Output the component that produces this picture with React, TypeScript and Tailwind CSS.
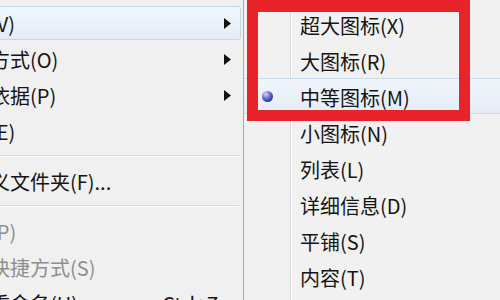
import React from 'react';

type LeftItem =
  | { sep: true }
  | {
      sep?: false;
      label: string;
      arrow?: boolean;
      hover?: boolean;
      disabled?: boolean;
      shortcut?: string;
    };

const LEFT_ITEMS: LeftItem[] = [
  { label: '查看(V)', arrow: true, hover: true },
  { label: '排序方式(O)', arrow: true },
  { label: '分组依据(P)', arrow: true },
  { label: '刷新(E)' },
  { sep: true },
  { label: '自定义文件夹(F)...' },
  { sep: true },
  { label: '粘贴(P)', disabled: true },
  { label: '粘贴快捷方式(S)', disabled: true },
  { label: '撤消重命名(U)', shortcut: 'Ctrl+Z' },
];

const VIEW_ITEMS = [
  '超大图标(X)',
  '大图标(R)',
  '中等图标(M)',
  '小图标(N)',
  '列表(L)',
  '详细信息(D)',
  '平铺(S)',
  '内容(T)',
];

const SELECTED = '中等图标(M)';

function Arrow() {
  return (
    <svg width="7" height="11" viewBox="0 0 7 11" className="mr-[9px] shrink-0">
      <polygon points="0,0 7,5.5 0,11" fill="#111" />
    </svg>
  );
}

function LeftMenu() {
  return (
    <div className="w-[244px] shrink-0 overflow-hidden border-r border-[#ababab] bg-[#f0f0f0]">
      <div className="-ml-[51px] w-[294px] pt-[5px] flex flex-col">
        {LEFT_ITEMS.map((item, i) =>
          item.sep ? (
            <div key={i} className="h-[14px] flex flex-col justify-center pr-[4px]">
              <div className="h-px bg-[#d7d7d7]" />
              <div className="h-px bg-white" />
            </div>
          ) : (
            <div key={i} className="h-[36px] py-[1px] pr-[2px]">
              <div
                className={
                  item.hover
                    ? 'h-full flex items-center rounded-[3px] border border-[#c4d7ea] bg-gradient-to-b from-[#f1f6fc] to-[#e3edf8]'
                    : 'h-full flex items-center border border-transparent'
                }
              >
                <span
                  className={
                    (item.disabled ? 'text-[#8e8e8e] ' : 'text-[#151515] ') +
                    'flex-1 pt-[2px] whitespace-nowrap text-[20px] leading-none'
                  }
                >
                  {item.shortcut ? (
                    <span className="flex">
                      <span className="w-[212px]">{item.label}</span>
                      <span>{item.shortcut}</span>
                    </span>
                  ) : (
                    item.label
                  )}
                </span>
                {item.arrow && <Arrow />}
              </div>
            </div>
          ),
        )}
      </div>
    </div>
  );
}

function ViewMenu() {
  return (
    <div className="flex-1 bg-[#f1f1f1] pt-[6px] flex flex-col bg-[linear-gradient(90deg,transparent_46px,#d9d9d9_46px,#d9d9d9_47px,#ffffff_47px,#ffffff_48px,transparent_48px)]">
      {VIEW_ITEMS.map((label) => {
        const selected = label === SELECTED;
        return (
          <div
            key={label}
            className={
              selected
                ? 'h-[36px] flex items-center border-y border-[#c9dbee] bg-gradient-to-b from-[#f0f5fb] to-[#e4edf7]'
                : 'h-[36px] flex items-center border-y border-transparent'
            }
          >
            <div className="w-[46px] shrink-0 flex items-center justify-center">
              {selected && (
                <div className="ml-[1px] w-[11px] h-[11px] rounded-full bg-[radial-gradient(circle_at_35%_30%,#d6d8ff_0%,#6d6fd0_40%,#2c2c86_80%,#1d1d5c_100%)]" />
              )}
            </div>
            <span className="pl-[10px] pt-[3px] whitespace-nowrap text-[20px] leading-none text-[#151515]">
              {label}
            </span>
          </div>
        );
      })}
    </div>
  );
}

export default function App() {
  return (
    <div className="relative w-[500px] h-[300px] overflow-hidden flex bg-[#f0f0f0] font-['Noto_Sans_CJK_SC','Noto_Sans',sans-serif]">
      <LeftMenu />
      <ViewMenu />
      <div className="absolute left-[247px] top-0 w-[223px] h-[121px] border-[11px] border-t-[12px] border-[#e8242a] pointer-events-none" />
    </div>
  );
}
